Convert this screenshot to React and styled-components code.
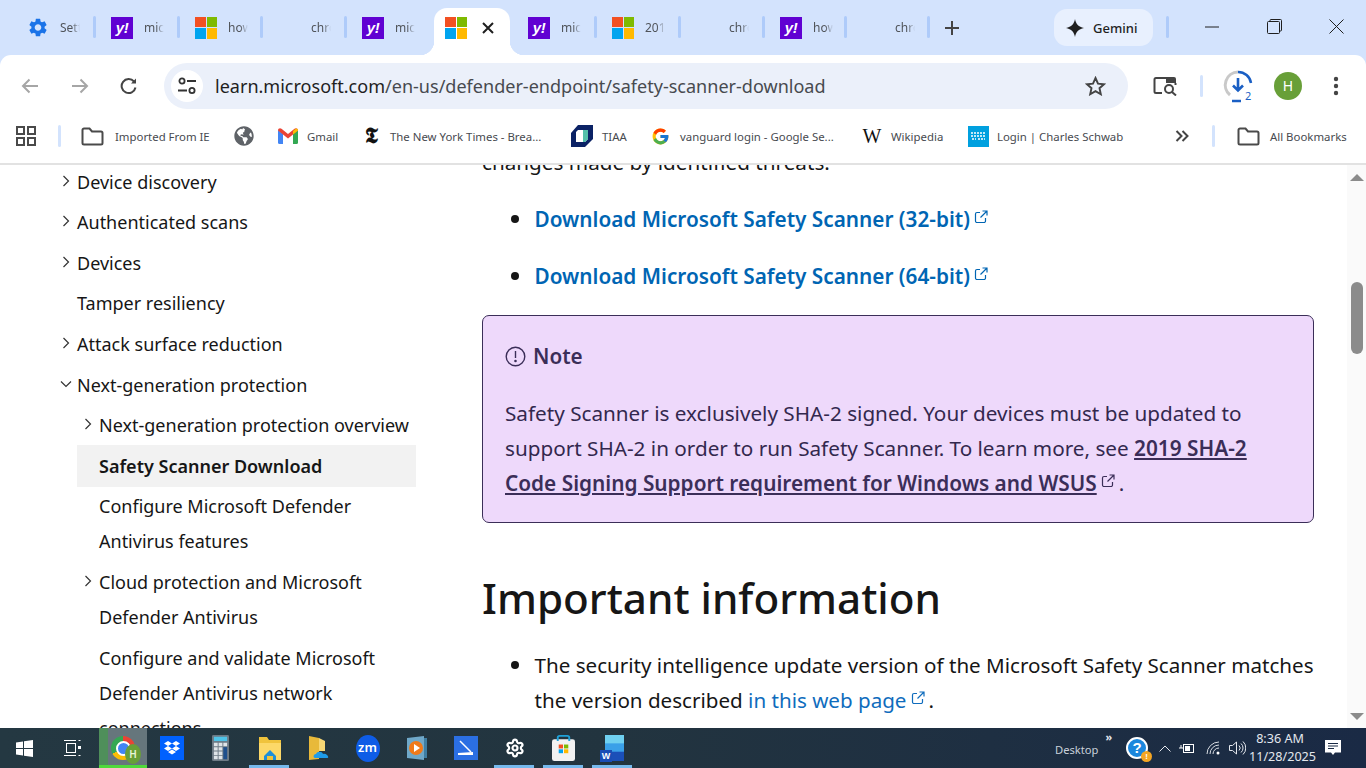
import React from "react";
import styled, { createGlobalStyle } from "styled-components";
import { MdSettings } from "react-icons/md";
import { FaGlobeAmericas } from "react-icons/fa";
import { FcGoogle } from "react-icons/fc";
import { Settings } from "lucide-react";

const font = `"Noto Sans", "Open Sans", sans-serif`;

const Global = createGlobalStyle`
  html, body { margin: 0; padding: 0; background: #fff; overflow: hidden; }
  * { box-sizing: border-box; }
`;

const Screen = styled.div`
  width: 1366px;
  height: 768px;
  display: flex;
  flex-direction: column;
  overflow: hidden;
  font-family: ${font};
  background: #d3e3fd;
`;

/* ---- tab strip ---- */
const TabStrip = styled.div`
  height: 55px;
  flex: none;
  display: flex;
  align-items: flex-start;
  padding-left: 12px;
`;
const Tab = styled.div`
  width: ${(p) => p.$w || 81}px;
  height: 47px;
  margin-top: 8px;
  display: flex;
  align-items: center;
  gap: 11px;
  padding: 0 0 8px 15px;
  flex: none;
`;
const TabTitle = styled.span`
  width: 20px;
  overflow: hidden;
  white-space: nowrap;
  font-size: 12px;
  color: #50545a;
  mask-image: linear-gradient(90deg, #000 60%, transparent 100%);
  -webkit-mask-image: linear-gradient(90deg, #000 60%, transparent 100%);
`;
const TabSep = styled.div`
  width: 3px;
  height: 22px;
  margin: 16px 0 0 ${(p) => p.$ml || 0}px;
  border-radius: 2px;
  background: #aecbfa;
  flex: none;
`;
const ActiveTab = styled.div`
  position: relative;
  width: 76px;
  height: 47px;
  margin: 8px 3px 0;
  background: #fff;
  border-radius: 13px 13px 0 0;
  display: flex;
  align-items: center;
  padding: 0 0 8px 11px;
  gap: 15px;
  flex: none;
  &::before,
  &::after {
    content: "";
    position: absolute;
    bottom: 0;
    width: 14px;
    height: 14px;
  }
  &::before {
    left: -14px;
    background: radial-gradient(circle at 0 0, transparent 14px, #fff 14.5px);
  }
  &::after {
    right: -14px;
    background: radial-gradient(circle at 100% 0, transparent 14px, #fff 14.5px);
  }
`;
const BlankIcon = styled.span`
  width: 22px;
  height: 22px;
  flex: none;
`;
const YahooIcon = styled.span`
  width: 22px;
  height: 22px;
  flex: none;
  background: #6001d2;
  color: #fff;
  font: italic 700 15px/21px "Liberation Sans", sans-serif;
  text-align: center;
  letter-spacing: -0.5px;
`;
const MsGrid = styled.span`
  width: ${(p) => p.$size || 22}px;
  height: ${(p) => p.$size || 22}px;
  flex: none;
  display: grid;
  grid-template-columns: 1fr 1fr;
  grid-template-rows: 1fr 1fr;
  gap: 1px;
`;
const MsTile = styled.i`
  background: ${(p) => p.$c};
`;
const MsLogo = ({ size }) => (
  <MsGrid $size={size}>
    <MsTile $c="#f25022" />
    <MsTile $c="#7fba00" />
    <MsTile $c="#00a4ef" />
    <MsTile $c="#ffb900" />
  </MsGrid>
);
const GearSlot = styled.span`
  width: 22px;
  height: 22px;
  flex: none;
  display: flex;
  align-items: center;
  justify-content: center;
  color: #1a73e8;
  font-size: 23px;
`;
const StripButton = styled.div`
  width: 24px;
  height: 24px;
  margin: 16px 0 0 ${(p) => p.$ml}px;
  flex: none;
  display: flex;
  align-items: center;
  justify-content: center;
`;
const GeminiPill = styled.div`
  width: 99px;
  height: 37px;
  margin: 9px 0 0 ${(p) => p.$ml}px;
  flex: none;
  border-radius: 13px;
  background: #e8f0fe;
  display: flex;
  align-items: center;
  gap: 9px;
  padding-left: 12px;
  font-size: 13px;
  font-weight: 500;
  color: #1f1f1f;
`;
const WinButton = styled.div`
  width: 62px;
  height: 55px;
  flex: none;
  margin-left: ${(p) => p.$ml || 0}px;
  display: flex;
  align-items: center;
  justify-content: center;
  padding-bottom: 2px;
`;

/* ---- toolbar ---- */
const Toolbar = styled.div`
  height: 55px;
  flex: none;
  background: #fff;
  border-radius: 11px 11px 0 0;
  display: flex;
  align-items: flex-start;
  padding-left: 6px;
`;
const ToolSlot = styled.div`
  position: relative;
  width: ${(p) => p.$w || 48}px;
  margin-left: ${(p) => p.$ml || 0}px;
  height: 46px;
  margin-top: 8px;
  flex: none;
  display: flex;
  align-items: center;
  justify-content: center;
`;
const DownloadCount = styled.span`
  position: absolute;
  left: 31px;
  top: 26px;
  font-size: 11px;
  line-height: 14px;
  color: #1a5fc4;
`;
const Omnibox = styled.div`
  width: 964px;
  height: 46px;
  margin: 8px 0 0 11px;
  flex: none;
  border-radius: 23px;
  background: #ebf0fa;
  display: flex;
  align-items: center;
  padding-left: 7px;
`;
const SiteInfo = styled.div`
  width: 32px;
  height: 32px;
  border-radius: 50%;
  background: #fff;
  flex: none;
  display: flex;
  align-items: center;
  justify-content: center;
`;
const Url = styled.div`
  margin-left: 12px;
  font-size: 18.05px;
  color: #474a4f;
  white-space: nowrap;
  flex: 1;
`;
const UrlHost = styled.span`
  color: #1f1f1f;
`;
const StarIcon = styled.svg`
  margin-right: 22px;
`;
const Avatar = styled.div`
  width: 28px;
  height: 28px;
  border-radius: 50%;
  background: #689f38;
  color: #fff;
  font-size: 14px;
  line-height: 28px;
  text-align: center;
`;
const ToolSep = styled.div`
  width: 3px;
  height: 22px;
  margin: 20px 0 0 ${(p) => p.$ml}px;
  background: #d3e3fd;
  border-radius: 2px;
  flex: none;
`;

/* ---- bookmarks ---- */
const Bookmarks = styled.div`
  height: 55px;
  flex: none;
  background: #fff;
  border-bottom: 2px solid #e2e2e2;
  display: flex;
  align-items: center;
  padding: 0 0 1px 16px;
`;
const BookIcon = styled.div`
  width: 20px;
  height: 22px;
  flex: none;
  display: flex;
  align-items: center;
  justify-content: center;
`;
const BookSep = styled.div`
  width: 3px;
  height: 22px;
  flex: none;
  background: #d3e3fd;
  border-radius: 2px;
  margin-left: ${(p) => p.$ml}px;
`;
const Bookmark = styled.div`
  width: ${(p) => p.$w}px;
  margin-left: ${(p) => p.$ml || 0}px;
  flex: none;
  display: flex;
  align-items: center;
  gap: ${(p) => p.$gap ?? 9}px;
  font-size: 11.4px;
  color: #474a4f;
  white-space: nowrap;
`;
const NytMark = styled.span`
  width: 20px;
  font: 700 21px/22px "DejaVu Sans", "Liberation Serif", serif;
  color: #111;
  text-align: center;
`;
const WikiMark = styled.span`
  width: 20px;
  font: 400 20px/22px "Liberation Serif", serif;
  color: #111;
  text-align: center;
`;

/* ---- page ---- */
const Page = styled.div`
  flex: 1;
  min-height: 0;
  background: #fff;
  display: flex;
  overflow: hidden;
`;
const Sidebar = styled.nav`
  width: 416px;
  flex: none;
  margin-top: -3.2px;
  font-size: 18px;
  line-height: 35px;
  color: #161616;
  white-space: nowrap;
`;
const NavItem = styled.div`
  display: flex;
  padding-left: ${(p) => 60 + p.$depth * 21.5}px;
`;
const NavToggle = styled.span`
  width: ${(p) => (p.$depth ? 17.5 : 17)}px;
  height: 40.6px;
  flex: none;
  display: flex;
  align-items: center;
  padding-bottom: 3px;
`;
const NavLabel = styled.span`
  flex: 1;
  padding: 2.8px 0;
`;
const NavLabelActive = styled(NavLabel)`
  font-weight: 600;
  background: #f2f2f2;
  margin: -1px 0 0 -22px;
  padding: 3.8px 0 1.8px 22px;
`;
const Main = styled.main`
  width: 832px;
  flex: none;
  margin: -20px 0 0 66px;
  font-size: 20.7px;
  line-height: 35px;
  color: #161616;
  white-space: nowrap;
`;
const Para = styled.p`
  margin: 0;
`;
const List = styled.ul`
  margin: 21.5px 0;
  padding: 0 0 0 52.5px;
  list-style: none;
`;
const Item = styled.li`
  position: relative;
  margin-top: ${(p) => (p.$gap ? 22 : 0)}px;
  font-size: ${(p) => p.$size || 20.7}px;
  &::before {
    content: "";
    position: absolute;
    left: -23.5px;
    top: 13.5px;
    width: 8px;
    height: 8px;
    border-radius: 50%;
    background: #161616;
  }
`;
const StrongLink = styled.a`
  color: #0065b3;
  font-weight: 600;
  font-size: 20.75px;
`;
const InlineLink = styled.a`
  color: #0f6cbd;
`;
const Ext = styled.svg`
  width: 14px;
  height: 14px;
  margin: 0 4px;
  vertical-align: 3px;
`;
const Note = styled.div`
  height: 208px;
  padding: 23px 22px 0;
  background: #eed9fb;
  border: 1px solid #3b2e58;
  border-radius: 7px;
  color: #3b2e58;
`;
const NoteTitle = styled.div`
  display: flex;
  align-items: center;
  gap: 7px;
  font-weight: 600;
  margin-bottom: 21.5px;
`;
const NoteText = styled.p`
  margin: 0;
  color: #33284e;
`;
const NoteLink = styled.a`
  color: #3b2e58;
  font-weight: 600;
  font-size: 20.8px;
  text-decoration: underline;
`;
const Heading = styled.h1`
  margin: 48px 0 22.5px;
  font-size: 42.2px;
  line-height: 54px;
  font-weight: 500;
  color: #161616;
`;
const Scrollbar = styled.div`
  width: 19px;
  margin-left: auto;
  flex: none;
  background: #fafafa;
  display: flex;
  flex-direction: column;
  align-items: center;
  padding: 9px 0 8px;
`;
const ArrowUp = styled.div`
  width: 0;
  height: 0;
  border-left: 7px solid transparent;
  border-right: 7px solid transparent;
  border-bottom: 7px solid #8b8b8b;
`;
const ArrowDown = styled(ArrowUp)`
  border-bottom: 0;
  border-top: 7px solid #8b8b8b;
  margin-top: auto;
`;
const Thumb = styled.div`
  width: 12px;
  height: 72px;
  margin-top: 101px;
  border-radius: 6px;
  background: #8b8b8b;
`;

/* ---- taskbar ---- */
const Taskbar = styled.div`
  height: 40px;
  flex: none;
  background: linear-gradient(90deg, #243842 0%, #22343f 45%, #1a2a45 100%);
  display: flex;
  align-items: stretch;
  color: #e4e8ee;
`;
const Cell = styled.div`
  position: relative;
  width: ${(p) => p.$w || 49}px;
  margin-left: ${(p) => p.$ml || 0}px;
  flex: none;
  display: flex;
  align-items: center;
  justify-content: center;
  background: ${(p) => (p.$active ? "#66767c" : "transparent")};
  border-bottom: 3px solid ${(p) => (p.$active ? "#4fd93b" : "transparent")};
  padding-top: 3px;
  &::after {
    content: "";
    display: ${(p) => (p.$running ? "block" : "none")};
    position: absolute;
    left: 4px;
    right: 5px;
    bottom: -3px;
    height: 3px;
    background: #76b9ed;
  }
`;
const ChromeStripe = styled.span`
  position: absolute;
  left: 0;
  top: 0;
  bottom: 0;
  width: 9px;
  background: #4f8f5a;
`;
const ChromeBall = styled.span`
  position: relative;
  width: 24px;
  height: 24px;
  border-radius: 50%;
  background: conic-gradient(#ea4335 0 120deg, #fbbc04 120deg 240deg, #34a853 240deg 360deg);
  display: flex;
  align-items: center;
  justify-content: center;
  &::before {
    content: "";
    width: 11px;
    height: 11px;
    border-radius: 50%;
    background: #4285f4;
    border: 2px solid #fff;
  }
`;
const ChromeBadge = styled.span`
  position: absolute;
  right: -6px;
  bottom: -4px;
  width: 16px;
  height: 20px;
  border-radius: 50%;
  background: #689f38;
  color: #e8f5d8;
  font-size: 10px;
  line-height: 20px;
  text-align: center;
  font-weight: 600;
`;
const ZoomBall = styled.span`
  width: 24px;
  height: 27px;
  border-radius: 50%;
  background: #0e5ce6;
  color: #fff;
  font-size: 13px;
  font-weight: 600;
  line-height: 25px;
  text-align: center;
`;
const WordLetter = styled.span`
  position: absolute;
  left: 12px;
  top: 22px;
  width: 12px;
  height: 12px;
  background: #1a4db5;
  color: #fff;
  font: 700 9px/12px "Liberation Sans", sans-serif;
  text-align: center;
`;
const TrayDesktop = styled.div`
  margin-left: auto;
  width: 43px;
  font-size: 11.2px;
  color: #c9d0da;
  align-self: center;
  white-space: nowrap;
  padding-top: 3px;
`;
const TrayChevrons = styled.div`
  width: 16px;
  margin-left: 3px;
  font-size: 11px;
  line-height: 14px;
  padding-top: 2px;
  font-weight: 700;
  text-align: center;
`;
const HelpBall = styled.span`
  position: relative;
  width: 22px;
  height: 22px;
  border-radius: 50%;
  background: #1b87dd;
  border: 2px solid #fff;
  color: #fff;
  font: 700 15px/18px "Liberation Sans", sans-serif;
  text-align: center;
`;
const HelpBadge = styled.span`
  position: absolute;
  right: -6px;
  bottom: -5px;
  width: 11px;
  height: 11px;
  border-radius: 50%;
  background: #f5a623;
  color: #fff;
  font: 700 8px/11px "Liberation Sans", sans-serif;
`;
const TrayCell = styled.div`
  width: ${(p) => p.$w}px;
  flex: none;
  display: flex;
  align-items: center;
  justify-content: center;
`;
const Clock = styled.div`
  width: 62px;
  flex: none;
  font-size: 12.6px;
  line-height: 18px;
  text-align: center;
  color: #e4e8ee;
  padding-top: 2px;
  white-space: nowrap;
`;

/* ---- small drawings ---- */
const Folder = () => (
  <svg width="23" height="19" viewBox="0 0 23 19" fill="none" stroke="#4a4a4a" strokeWidth="2">
    <path d="M1.5 3a1.5 1.5 0 0 1 1.5-1.5h5.5l2.5 3h9a1.5 1.5 0 0 1 1.5 1.5v10a1.5 1.5 0 0 1-1.5 1.5H3A1.5 1.5 0 0 1 1.5 16z" />
  </svg>
);
const ExtIcon = ({ color }) => (
  <Ext viewBox="0 0 14 14" fill="none" stroke={color} strokeWidth="1.2">
    <path d="M6 2.5H3A1.5 1.5 0 0 0 1.5 4v7A1.5 1.5 0 0 0 3 12.5h7a1.5 1.5 0 0 0 1.5-1.5V8" />
    <path d="M8.5 1h4.5v4.5M13 1L6.5 7.5" />
  </Ext>
);
const Chev = ({ open }) => (
  <svg width="12" height="12" viewBox="0 0 12 12" fill="none" stroke="#333" strokeWidth="1.2">
    <path d={open ? "M1 3.5l5 5 5-5" : "M3.5 1l5 5-5 5"} />
  </svg>
);

const nav = [
  { d: 0, t: "Device discovery", c: "r" },
  { d: 0, t: "Authenticated scans", c: "r" },
  { d: 0, t: "Devices", c: "r" },
  { d: 0, t: "Tamper resiliency" },
  { d: 0, t: "Attack surface reduction", c: "r" },
  { d: 0, t: "Next-generation protection", c: "d" },
  { d: 1, t: "Next-generation protection overview", c: "r" },
  { d: 1, t: "Safety Scanner Download", active: true },
  { d: 1, t: "Configure Microsoft Defender", t2: "Antivirus features" },
  { d: 1, t: "Cloud protection and Microsoft", t2: "Defender Antivirus", c: "r" },
  { d: 1, t: "Configure and validate Microsoft", t2: "Defender Antivirus network", t3: "connections" },
];

export default function App() {
  return (
    <Screen>
      <Global />
      <TabStrip>
        <Tab><GearSlot><MdSettings /></GearSlot><TabTitle>Settings</TabTitle></Tab>
        <TabSep />
        <Tab><YahooIcon>y!</YahooIcon><TabTitle>microsoft</TabTitle></Tab>
        <TabSep />
        <Tab $w={80}><MsLogo /><TabTitle>how to</TabTitle></Tab>
        <TabSep />
        <Tab><BlankIcon /><TabTitle>chrome</TabTitle></Tab>
        <TabSep />
        <Tab $w={84}><YahooIcon>y!</YahooIcon><TabTitle>microsoft</TabTitle></Tab>
        <ActiveTab>
          <MsLogo />
          <svg width="12" height="12" viewBox="0 0 12 12" stroke="#1f1f1f" strokeWidth="2"><path d="M1 1l10 10M11 1L1 11" /></svg>
        </ActiveTab>
        <Tab><YahooIcon>y!</YahooIcon><TabTitle>microsoft</TabTitle></Tab>
        <TabSep />
        <Tab><MsLogo /><TabTitle>2019</TabTitle></Tab>
        <TabSep />
        <Tab><BlankIcon /><TabTitle>chrome</TabTitle></Tab>
        <TabSep />
        <Tab $w={79}><YahooIcon>y!</YahooIcon><TabTitle>how to</TabTitle></Tab>
        <TabSep />
        <Tab $w={80}><BlankIcon /><TabTitle>chrome</TabTitle></Tab>
        <TabSep />
        <StripButton $ml={10}>
          <svg width="16" height="16" viewBox="0 0 16 16" stroke="#444" strokeWidth="2"><path d="M8 1v14M1 8h14" /></svg>
        </StripButton>
        <GeminiPill $ml={90}>
          <svg width="18" height="18" viewBox="0 0 18 18"><path d="M9 0c.8 4.8 3.6 8 9 9-5.4 1-8.2 4.2-9 9-.8-4.8-3.6-8-9-9 5.4-1 8.2-4.2 9-9z" fill="#1f1f1f" /></svg>
          Gemini
        </GeminiPill>
        <TabSep $ml={13} />
        <WinButton $ml={12}>
          <svg width="14" height="2" viewBox="0 0 14 2"><path d="M0 1h14" stroke="#1f1f1f" strokeWidth="1" /></svg>
        </WinButton>
        <WinButton>
          <svg width="15" height="15" viewBox="0 0 15 15" fill="none" stroke="#1f1f1f"><rect x="0.5" y="2.5" width="12" height="12" rx="1" /><path d="M3 2.5v-1a1 1 0 0 1 1-1h9.5a1 1 0 0 1 1 1V11a1 1 0 0 1-1 1h-1" /></svg>
        </WinButton>
        <WinButton>
          <svg width="15" height="15" viewBox="0 0 15 15" stroke="#1f1f1f"><path d="M.5.5l14 14M14.5.5l-14 14" /></svg>
        </WinButton>
      </TabStrip>

      <Toolbar>
        <ToolSlot>
          <svg width="18" height="16" viewBox="0 0 18 16" fill="none" stroke="#a6a6a6" strokeWidth="2"><path d="M17 8H2M8.5 1.5L2 8l6.5 6.5" /></svg>
        </ToolSlot>
        <ToolSlot $ml={2}>
          <svg width="18" height="16" viewBox="0 0 18 16" fill="none" stroke="#a6a6a6" strokeWidth="2"><path d="M1 8h15M9.5 1.5L16 8l-6.5 6.5" /></svg>
        </ToolSlot>
        <ToolSlot $ml={1}>
          <svg width="18" height="18" viewBox="0 0 18 18" fill="none" stroke="#444" strokeWidth="2"><path d="M15.5 10.5A7 7 0 1 1 14 4.5" /><path d="M16 1.5v5h-5z" fill="#444" stroke="none" /></svg>
        </ToolSlot>
        <Omnibox>
          <SiteInfo>
            <svg width="20" height="20" viewBox="0 0 20 20" fill="none" stroke="#333" strokeWidth="1.8"><circle cx="5" cy="5" r="2.6" /><path d="M10 5h9M1 14.5h9" /><circle cx="15" cy="14.5" r="2.6" /></svg>
          </SiteInfo>
          <Url><UrlHost>learn.microsoft.com</UrlHost>/en-us/defender-endpoint/safety-scanner-download</Url>
          <StarIcon width="21" height="20" viewBox="0 0 21 20" fill="none" stroke="#444" strokeWidth="1.9"><path d="M10.5 2l2.5 5.6 6 .6-4.5 4 1.3 6-5.3-3.1-5.3 3.1 1.3-6-4.500-4 6-.6z" /></StarIcon>
        </Omnibox>
        <ToolSlot $ml={13}>
          <svg width="25" height="20" viewBox="0 0 25 20" fill="none" stroke="#444" strokeWidth="2"><path d="M9 17H3a1.5 1.5 0 0 1-1.5-1.5v-12A1.5 1.5 0 0 1 3 2h12" /><path d="M13 1h8a2 2 0 0 1 2 2v4H13z" fill="#444" stroke="none" /><path d="M22.5 7v2" /><circle cx="16" cy="13" r="4" /><path d="M19 16l4 3.5" /></svg>
        </ToolSlot>
        <ToolSep $ml={11} />
        <ToolSlot $ml={11}>
          <svg width="30" height="34" viewBox="0 0 30 34" fill="none"><path d="M7 26A13 13 0 0 1 15 3" stroke="#c9c9c9" strokeWidth="3" /><path d="M15 3a13 13 0 0 1 13 11" stroke="#1a5fc4" strokeWidth="2.5" /><path d="M15 9v12M10 16.5l5 5 5-5" stroke="#1a5fc4" strokeWidth="2.6" /><path d="M9 32h9" stroke="#1a5fc4" strokeWidth="2.5" /></svg>
          <DownloadCount>2</DownloadCount>
        </ToolSlot>
        <ToolSlot $w={28} $ml={12}><Avatar>H</Avatar></ToolSlot>
        <ToolSlot $ml={10}>
          <svg width="6" height="20" viewBox="0 0 6 20" fill="#444"><circle cx="3" cy="3" r="2.2" /><circle cx="3" cy="10" r="2.2" /><circle cx="3" cy="17" r="2.2" /></svg>
        </ToolSlot>
      </Toolbar>

      <Bookmarks>
        <BookIcon>
          <svg width="20" height="20" viewBox="0 0 20 20" fill="none" stroke="#4a4a4a" strokeWidth="2"><rect x="1" y="1" width="7" height="7" /><rect x="12" y="1" width="7" height="7" /><rect x="1" y="12" width="7" height="7" /><rect x="12" y="12" width="7" height="7" /></svg>
        </BookIcon>
        <BookSep $ml={22} />
        <Bookmark $w={153} $ml={20} $gap={11}><Folder />Imported From IE</Bookmark>
        <Bookmark $w={44} $gap={0}><FaGlobeAmericas size={20} color="#5f6368" /></Bookmark>
        <Bookmark $w={83}>
          <svg width="20" height="16" viewBox="0 0 20 16">
            <path d="M0 2v12.5A1.5 1.5 0 0 0 1.5 16H5V6z" fill="#4285f4" />
            <path d="M20 2v12.5a1.5 1.5 0 0 1-1.5 1.5H15V6z" fill="#34a853" />
            <path d="M0 2.5C0 .5 2 -.5 3.5.8L10 6l6.5-5.2C18 -.5 20 .5 20 2.5L15 6.500 10 10.5 5 6.500z" fill="#ea4335" />
            <path d="M15 3l3-2.4c.8-.3 2 .4 2 2L15 6.5z" fill="#fbbc04" />
          </svg>
          Gmail
        </Bookmark>
        <Bookmark $w={210}><NytMark>𝕿</NytMark>The New York Times - Brea...</Bookmark>
        <Bookmark $w={80}>
          <svg width="22" height="22" viewBox="0 0 22 22"><path d="M7 0h15v14l-8 8H0V8z" fill="#0b2265" /><path d="M7 5h10v9l-3 3H5V7z" fill="#fff" /><path d="M12 5h5v9l-3 3h-2z" fill="#53bfa9" /></svg>
          TIAA
        </Bookmark>
        <Bookmark $w={211} $gap={10}><FcGoogle size={19} />vanguard login - Google Se...</Bookmark>
        <Bookmark $w={106}><WikiMark>W</WikiMark>Wikipedia</Bookmark>
        <Bookmark $w={207} $gap={8}>
          <svg width="21" height="21" viewBox="0 0 21 21"><rect width="21" height="21" fill="#00a0df" /><path d="M3 7h15M3 10h15M4 13h4M10 13h7" stroke="#fff" strokeWidth="1.5" strokeDasharray="2 1" /></svg>
          Login | Charles Schwab
        </Bookmark>
        <svg width="14" height="12" viewBox="0 0 14 12" fill="none" stroke="#444" strokeWidth="2"><path d="M1.5 1l5 5-5 5M7.5 1l5 5-5 5" /></svg>
        <BookSep $ml={23} />
        <Bookmark $w={120} $ml={22} $gap={10}><Folder />All Bookmarks</Bookmark>
      </Bookmarks>

      <Page>
        <Sidebar>
          {nav.map((n) => {
            const Label = n.active ? NavLabelActive : NavLabel;
            return (
              <NavItem key={n.t} $depth={n.d}>
                <NavToggle $depth={n.d}>{n.c && <Chev open={n.c === "d"} />}</NavToggle>
                <Label>
                  {n.t}
                  {n.t2 && <br />}
                  {n.t2}
                  {n.t3 && <br />}
                  {n.t3}
                </Label>
              </NavItem>
            );
          })}
        </Sidebar>

        <Main>
          <Para>changes made by identified threats.</Para>
          <List>
            <Item><StrongLink>Download Microsoft Safety Scanner (32-bit)</StrongLink><ExtIcon color="#0065b3" /></Item>
            <Item $gap><StrongLink>Download Microsoft Safety Scanner (64-bit)</StrongLink><ExtIcon color="#0065b3" /></Item>
          </List>
          <Note>
            <NoteTitle>
              <svg width="21" height="21" viewBox="0 0 21 21" fill="none" stroke="#3b2e58" strokeWidth="1.4"><circle cx="10.5" cy="10.5" r="9.3" /><path d="M10.5 5v7" /><circle cx="10.5" cy="15" r="0.6" fill="#3b2e58" /></svg>
              Note
            </NoteTitle>
            <NoteText>
              Safety Scanner is exclusively SHA-2 signed. Your devices must be updated to<br />
              support SHA-2 in order to run Safety Scanner. To learn more, see <NoteLink>2019 SHA-2</NoteLink><br />
              <NoteLink>Code Signing Support requirement for Windows and WSUS</NoteLink><ExtIcon color="#3b2e58" />.
            </NoteText>
          </Note>
          <Heading>Important information</Heading>
          <List>
            <Item $size={20.6}>
              The security intelligence update version of the Microsoft Safety Scanner matches<br />
              the version described <InlineLink>in this web page</InlineLink><ExtIcon color="#0f6cbd" />.
            </Item>
          </List>
        </Main>

        <Scrollbar>
          <ArrowUp />
          <Thumb />
          <ArrowDown />
        </Scrollbar>
      </Page>

      <Taskbar>
        <Cell $w={48}>
          <svg width="17" height="17" viewBox="0 0 17 17" fill="#fff"><path d="M0 2.5l7-1V8H0zM8 1.300L17 0v8H8zM0 9h7v6.500l-7-1zM8 9h9v8l-9-1.300z" /></svg>
        </Cell>
        <Cell $w={48}>
          <svg width="18" height="18" viewBox="0 0 18 18" fill="none" stroke="#fff"><rect x="3.5" y="4.5" width="9" height="9" /><path d="M1 1.5h12M1 16.5h12" /><rect x="15" y="7" width="3" height="3" fill="#fff" stroke="none" /><path d="M15.5 1.5h2M15.5 16.5h2" /></svg>
        </Cell>
        <Cell $ml={3} $w={48} $active>
          <ChromeStripe />
          <ChromeBall><ChromeBadge>H</ChromeBadge></ChromeBall>
        </Cell>
        <Cell>
          <svg width="24" height="24" viewBox="0 0 24 24"><rect width="24" height="24" fill="#0061fe" /><path d="M8 5l4 2.5L8 10 4 7.5zM16 5l4 2.5-4 2.5-4-2.5zM8 10l4 2.5L8 15l-4-2.5zM16 10l4 2.5-4 2.5-4-2.5zM8 16l4-2.500 4 2.500-4 2.500z" fill="#fff" /></svg>
        </Cell>
        <Cell>
          <svg width="17" height="26" viewBox="0 0 18 30" preserveAspectRatio="none"><rect width="18" height="30" rx="1.5" fill="#6d7a85" /><rect x="2" y="2" width="14" height="5" fill="#4fc3e8" /><path d="M2 9h4v4H2zM7 9h4v4H7zM2 14h4v4H2zM7 14h4v4H7zM2 19h4v4H2zM7 19h4v4H7zM2 24h4v4H2zM7 24h4v4H7zM12 9h4v4h-4z" fill="#dfe4e8" /><rect x="12" y="14" width="4" height="14" fill="#1e4f8c" /></svg>
        </Cell>
        <Cell $running>
          <svg width="22" height="24" viewBox="0 0 22 24"><path d="M0 1h8l2 3h12v20H0z" fill="#f0c33c" /><path d="M0 7h22v17H0z" fill="#fcd868" /><path d="M5 20l6-6 6 6v4H5z" fill="#1f8fd8" /><rect x="8" y="20" width="6" height="4" fill="#f0c33c" /></svg>
        </Cell>
        <Cell>
          <svg width="20" height="26" viewBox="0 0 20 26"><path d="M0 1l10 2v21L0 25z" fill="#e8b93a" /><path d="M10 3l6 3v10H10z" fill="#f7d775" /><path d="M6 23c-2 0-2-4 1-4 1-3 6-3 7 0 4-1 7 4 4 4z" fill="#1e9be8" /></svg>
        </Cell>
        <Cell><ZoomBall>zm</ZoomBall></Cell>
        <Cell>
          <svg width="20" height="24" viewBox="0 0 20 24"><path d="M0 2l17-2v24L0 22z" fill="#6fa8c9" /><rect x="17" y="2" width="3" height="20" fill="#3f7ea3" /><circle cx="9" cy="12" r="7" fill="#f07a1a" /><path d="M7 8l6 4-6 4z" fill="#fff" /></svg>
        </Cell>
        <Cell>
          <svg width="24" height="24" viewBox="0 0 24 24"><rect width="24" height="24" fill="#2b6fe3" /><path d="M6 5l11 11" stroke="#fff" strokeWidth="1.5" /><path d="M4 17l15-1v3H4z" fill="#fff" /></svg>
        </Cell>
        <Cell $running><Settings size={20} color="#fff" strokeWidth={2.6} /></Cell>
        <Cell $running>
          <svg width="23" height="26" viewBox="0 0 24 30" preserveAspectRatio="none"><rect y="5" width="24" height="25" rx="2.5" fill="#f2f2f2" /><path d="M6 7V3a2 2 0 0 1 2-2h8a2 2 0 0 1 2 2v4" fill="none" stroke="#1fa1d8" strokeWidth="2" /><path d="M7 11h4.5v4.500H7z" fill="#f25022" /><path d="M12.5 11H17v4.500h-4.500z" fill="#7fba00" /><path d="M7 16.500h4.500V21H7z" fill="#00a4ef" /><path d="M12.5 16.500H17V21h-4.500z" fill="#ffb900" /></svg>
        </Cell>
        <Cell $running>
          <svg width="22" height="26" viewBox="0 0 22 28" preserveAspectRatio="none"><rect x="3" width="19" height="28" rx="2" fill="#3aa0e8" /><rect x="3" width="19" height="9" fill="#6fd0f0" /><rect x="3" y="18" width="19" height="10" fill="#1b4fb8" /></svg>
          <WordLetter>W</WordLetter>
        </Cell>
        <TrayDesktop>Desktop</TrayDesktop>
        <TrayChevrons>»</TrayChevrons>
        <TrayCell $w={40}><HelpBall>?<HelpBadge>!</HelpBadge></HelpBall></TrayCell>
        <TrayCell $w={16}>
          <svg width="12" height="7" viewBox="0 0 12 7" fill="none" stroke="#e4e8ee"><path d="M.5 6.5L6 1l5.5 5.5" /></svg>
        </TrayCell>
        <TrayCell $w={28}>
          <svg width="16" height="12" viewBox="0 0 16 12" fill="none" stroke="#fff"><rect x="4.5" y="2.5" width="10" height="8" /><rect x="6" y="4" width="5" height="5" fill="#fff" stroke="none" /><path d="M0 6h4M2 3v3" /></svg>
        </TrayCell>
        <TrayCell $w={24}>
          <svg width="15" height="14" viewBox="0 0 15 14" fill="none" stroke="#d8dde3"><path d="M1 13A12 12 0 0 1 13 1M4 13a9 9 0 0 1 9-9M7 13a6 6 0 0 1 6-6" /><circle cx="12" cy="12" r="1.5" fill="#fff" stroke="none" /></svg>
        </TrayCell>
        <TrayCell $w={24}>
          <svg width="17" height="14" viewBox="0 0 17 14" fill="none" stroke="#e4e8ee"><path d="M.5 4.5h3L7.5 1v12l-4-3.500h-3zM10 4.500a3.500 3.500 0 0 1 0 5M12 2.500a6 6 0 0 1 0 9M14 .5a9 9 0 0 1 0 13" /></svg>
        </TrayCell>
        <Clock>8:36 AM<br />11/28/2025</Clock>
        <TrayCell $w={44}>
          <svg width="16" height="16" viewBox="0 0 16 16"><path d="M0 0h16v12.500H10L8 15 6 12.500H0z" fill="#fff" /><path d="M3 3.5h10M3 6h10M3 8.5h6" stroke="#1a2a45" /></svg>
        </TrayCell>
        <TrayCell $w={11} />
      </Taskbar>
    </Screen>
  );
}
